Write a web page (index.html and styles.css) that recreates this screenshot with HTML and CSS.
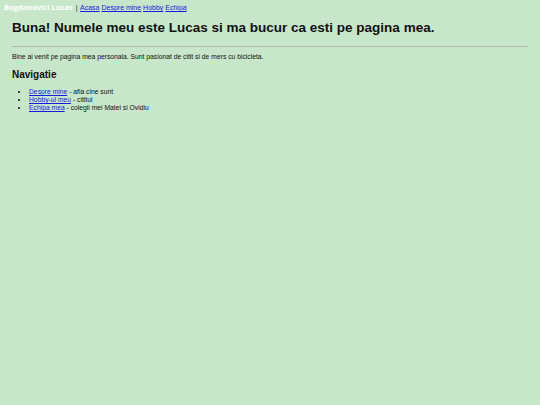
FILE: index.html
```html
<!DOCTYPE html>
<html>
<head>
<meta charset="utf-8">
<link rel="stylesheet" href="styles.css">
</head>
<body>
<div class="topbar"><span class="brand">Bogdanovici Lucas</span> <span class="sep">|</span> <a href="#">Acasa</a> <a href="#">Despre mine</a> <a href="#">Hobby</a> <a href="#">Echipa</a></div>
<main class="content">
<h1 class="title">Buna! Numele meu este Lucas si ma bucur ca esti pe pagina mea.</h1>
<hr class="rule">
<p class="intro">Bine ai venit pe pagina mea personala. Sunt pasionat de citit si de mers cu bicicleta.</p>
<h2 class="subtitle">Navigatie</h2>
<ul class="navlist">
<li><a href="#">Despre mine</a> - afla cine sunt</li>
<li><a href="#">Hobby-ul meu</a> - cititul</li>
<li><a href="#">Echipa mea</a> - colegii mei Matei si Ovidiu</li>
</ul>
</main>
</body>
</html>
```
FILE: styles.css
```css
html, body {
  margin: 0;
  padding: 0;
  background: #c8e6c9;
  font-family: "Liberation Sans", Arial, sans-serif;
  color: #111;
}
.topbar {
  font-size: 7px;
  line-height: 9px;
  padding: 3px 4px 0;
  height: 11px;
}
.brand {
  color: #fff;
  font-weight: bold;
  font-family: "Open Sans", sans-serif;
  font-size: 7.5px;
}
.sep {
  color: #333;
  margin: 0 1px;
}
a {
  color: #1a1adb;
  text-decoration: underline;
}
.content {
  padding: 0 12px;
}
.title {
  font-size: 13.5px;
  font-weight: bold;
  margin: 6px 0 0;
  line-height: 16px;
}
.rule {
  border: 0;
  border-top: 1px solid #b0b8b0;
  margin: 10px 0 0;
}
.intro {
  font-size: 6.75px;
  line-height: 9px;
  margin: 5px 0 0;
}
.subtitle {
  font-size: 10px;
  font-weight: bold;
  margin: 8px 0 0;
  line-height: 12px;
}
.navlist {
  font-size: 6.75px;
  line-height: 8px;
  margin: 7px 0 0;
  padding-left: 17px;
}
```
